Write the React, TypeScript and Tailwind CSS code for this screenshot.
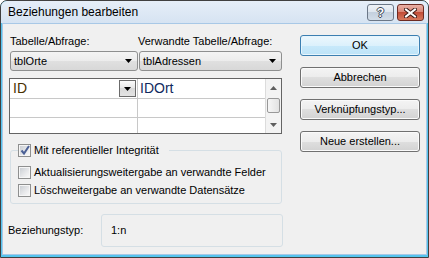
import React from "react";

function DownArrow({ color = "#000" }: { color?: string }) {
  return (
    <svg width="7" height="4" viewBox="0 0 7 4">
      <path d="M0 0H7L3.5 4Z" fill={color} />
    </svg>
  );
}

function UpArrow({ color = "#000" }: { color?: string }) {
  return (
    <svg width="7" height="4" viewBox="0 0 7 4">
      <path d="M0 4H7L3.5 0Z" fill={color} />
    </svg>
  );
}

function Combo({ value, width }: { value: string; width: string }) {
  return (
    <div
      className={`${width} h-[20px] flex items-center justify-between pl-[3px] pr-[5px] border border-[#8e8f8f] rounded-[3px] bg-[linear-gradient(#f4f4f4,#ececec_50%,#e0e0e0_50%,#d8d8d8)]`}
    >
      <span>{value}</span>
      <DownArrow />
    </div>
  );
}

function Check({ checked }: { checked?: boolean }) {
  return (
    <div className="relative w-[13px] h-[13px] shrink-0 border border-[#8e8f8f] bg-[#f6f6f6] p-[1px]">
      <div className="w-full h-full bg-[linear-gradient(135deg,#cbcfd4,#e8e9eb_60%,#f7f7f7)]" />
      {checked && (
        <svg className="absolute left-[0px] top-[-1px]" width="12" height="12" viewBox="0 0 12 12">
          <path d="M2.5 6.5L5 9.5L10 2" fill="none" stroke="#4c6196" strokeWidth="2" />
        </svg>
      )}
    </div>
  );
}

function Btn({ label, primary }: { label: string; primary?: boolean }) {
  return (
    <div
      className={
        primary
          ? "h-[21px] flex items-center justify-center rounded-[3px] border border-[#3c7fb1] bg-[linear-gradient(#ecf7fd,#dcf1fc_50%,#c8e9fb_50%,#bde3f7)] shadow-[inset_0_0_0_1px_#e6f5fd]"
          : "h-[21px] flex items-center justify-center rounded-[3px] border border-[#707070] bg-[linear-gradient(#f4f4f4,#ececec_50%,#dfdfdf_50%,#d2d2d2)] shadow-[inset_0_0_0_1px_#fafafa]"
      }
    >
      {label}
    </div>
  );
}

export default function App() {
  return (
    <div className="w-[429px] h-[258px] flex flex-col border border-[#404040] rounded-t-[7px] bg-[#55c4ee] overflow-hidden text-[11px] text-black font-['Liberation_Sans',Arial,sans-serif]">
      <div className="h-[22px] shrink-0 flex items-center pl-[7px] pr-[4px] bg-[linear-gradient(#e6eef8,#d6e3f2)]">
        <span className="text-[12px]">Beziehungen bearbeiten</span>
        <div className="ml-auto flex gap-[3px] mt-[1px]">
          <div className="w-[27px] h-[17px] flex items-center justify-center rounded-[3px] border border-[#6b7787] bg-[linear-gradient(#eef2f7,#dde5ee_50%,#c4d0de_50%,#d2dde8)]">
            <span className="text-[12px] font-bold text-white leading-none [text-shadow:1px_0_#3a4656,-1px_0_#3a4656,0_1px_#3a4656,0_-1px_#3a4656]">
              ?
            </span>
          </div>
          <div className="w-[27px] h-[17px] flex items-center justify-center rounded-[3px] border border-[#6d2a22] bg-[linear-gradient(#eab0a5,#d88271_50%,#c24d38_50%,#d77a5e)]">
            <svg width="13" height="10" viewBox="0 0 13 10">
              <path d="M2 1.5L11 8.5M11 1.5L2 8.5" stroke="#3b1a16" strokeWidth="4" strokeLinecap="square" />
              <path d="M2 1.5L11 8.5M11 1.5L2 8.5" stroke="#fff" strokeWidth="2" strokeLinecap="square" />
            </svg>
          </div>
        </div>
      </div>

      <div className="flex-1 mx-[1px] mb-[2px] border border-[#a8c8e6] bg-[#f0f0f0] flex pt-[10px] pl-[6px]">
        <div className="w-[274px] flex flex-col">
          <div className="h-[14px] flex items-center">
            <span className="w-[129px] pl-[1px]">Tabelle/Abfrage:</span>
            <span>Verwandte Tabelle/Abfrage:</span>
          </div>
          <div className="mt-[3px] flex pl-[1px]">
            <Combo value="tblOrte" width="w-[128px]" />
            <div className="ml-[1px]">
              <Combo value="tblAdressen" width="w-[143px]" />
            </div>
          </div>

          <div className="mt-[7px] w-[273px] h-[56px] border border-[#646464] bg-white flex text-[14px]">
            <div className="w-[128px] flex flex-col border-r border-[#c8c8c8]">
              <div className="h-[20px] border-b border-[#c8c8c8] flex items-center pl-[3px] pr-[1px]">
                <span className="text-[#4a3000]">ID</span>
                <div className="ml-auto w-[17px] h-[17px] flex items-center justify-center border border-[#6b6b6b] bg-[linear-gradient(#fbfbfb,#e6e6e6_50%,#d9d9d9_50%,#e4e4e4)]">
                  <DownArrow />
                </div>
              </div>
              <div className="h-[19px] border-b border-[#c8c8c8]" />
              <div className="flex-1" />
            </div>
            <div className="w-[128px] flex flex-col border-r border-[#dcdcdc]">
              <div className="h-[20px] border-b border-[#c8c8c8] flex items-center pl-[2px]">
                <span className="text-[#102a60]">IDOrt</span>
              </div>
              <div className="h-[19px] border-b border-[#c8c8c8]" />
              <div className="flex-1" />
            </div>
            <div className="flex-1 flex flex-col bg-[#f3f3f3]">
              <div className="h-[17px] flex items-center justify-center">
                <UpArrow color="#5f5f5f" />
              </div>
              <div className="mt-[2px] mx-[1px] h-[15px] rounded-[2px] border border-[#989898] bg-[linear-gradient(90deg,#f6f6f6,#e2e2e2)]" />
              <div className="flex-1" />
              <div className="h-[17px] flex items-center justify-center">
                <DownArrow color="#5f5f5f" />
              </div>
            </div>
          </div>

          <fieldset className="mt-[9px] ml-[1px] w-[272px] h-[61px] border border-[#d5dfe5] rounded-[3px] px-[7px]">
            <legend className="h-[14px] flex items-center gap-[3px] pr-[10px]">
              <Check checked />
              <span>Mit referentieller Integrität</span>
            </legend>
            <div className="mt-[9px] h-[13px] flex items-center gap-[3px]">
              <Check />
              <span>Aktualisierungsweitergabe an verwandte Felder</span>
            </div>
            <div className="mt-[5px] h-[13px] flex items-center gap-[3px]">
              <Check />
              <span>Löschweitergabe an verwandte Datensätze</span>
            </div>
          </fieldset>

          <div className="mt-[10px] h-[33px] flex items-center -ml-[1px]">
            <span className="w-[93px]">Beziehungstyp:</span>
            <div className="w-[182px] h-full flex items-center pl-[9px] pb-[1px] border border-[#d5dfe5] rounded-[3px]">
              1:n
            </div>
          </div>
        </div>

        <div className="ml-[17px] w-[120px] mt-[1px] flex flex-col gap-[11px]">
          <Btn label="OK" primary />
          <Btn label="Abbrechen" />
          <Btn label="Verknüpfungstyp..." />
          <Btn label="Neue erstellen..." />
        </div>
      </div>
    </div>
  );
}
